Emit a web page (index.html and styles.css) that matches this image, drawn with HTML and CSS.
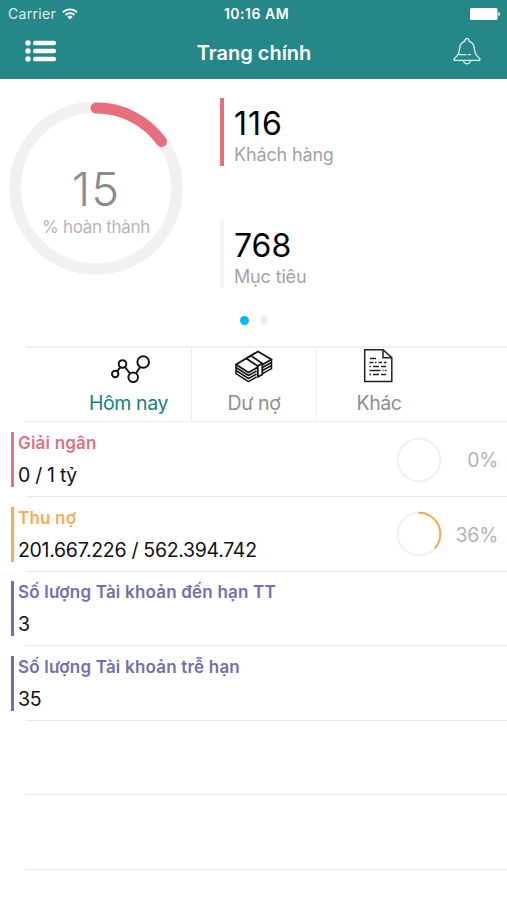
FILE: index.html
```html
<!DOCTYPE html>
<html lang="vi">
<head>
    <meta charset="UTF-8">
    <meta name="viewport" content="width=device-width, initial-scale=1.0">
    <title>Trang chính</title>
    <link rel="stylesheet" href="styles.css">
</head>
<body>
    <header class="header">
        <div class="status-bar">
            <div class="carrier">
                <span>Carrier</span>
                <svg class="wifi" width="16" height="12" viewBox="0 0 16 12" fill="none" stroke="#fff" stroke-width="1.8">
                    <path d="M1 4.3a10 10 0 0 1 14 0M3.5 7a6.4 6.4 0 0 1 9 0"/>
                    <path d="M8 11.5L5.4 8.9a3.7 3.7 0 0 1 5.2 0z" fill="#fff" stroke="none"/>
                </svg>
            </div>
            <span class="time">10:16 AM</span>
            <svg class="battery" width="31" height="12" viewBox="0 0 31 12" fill="#fff">
                <rect x="0" y="0" width="27.5" height="12" rx="1.5"/>
                <path d="M28.3 4c2.2.6 2.2 3.4 0 4z"/>
            </svg>
        </div>
        <div class="nav-bar">
            <svg class="menu-icon" width="32" height="23" viewBox="0 0 32 23" fill="#fff">
                <circle cx="3" cy="3" r="2.7"/>
                <circle cx="3" cy="11" r="2.7"/>
                <circle cx="3" cy="19" r="2.7"/>
                <rect x="8" y="0.7" width="23" height="4.6" rx="2"/>
                <rect x="8" y="8.7" width="23" height="4.6" rx="2"/>
                <rect x="8" y="16.7" width="23" height="4.6" rx="2"/>
            </svg>
            <h1>Trang chính</h1>
            <svg class="bell-icon" width="28" height="27" viewBox="0 0 28 27" fill="none" stroke="#d5f1f0" stroke-width="1.3" stroke-linejoin="round">
                <path d="M12 3.2V2.5a2 2 0 0 1 4 0v.7c3.600 1 5 3.800 5.400 7.500.4 4.300 1.700 7.300 5.500 10v1.600H1.100v-1.600c3.800-2.700 5.100-5.700 5.500-10 .4-3.700 1.800-6.500 5.400-7.500z"/>
                <path d="M10.5 22.5c.5 4.300 6.500 4.300 7 0M5.500 16.700h8M15 16.700h3"/>
            </svg>
        </div>
    </header>

    <section class="summary">
        <div class="progress">
            <svg class="ring" width="174" height="174" viewBox="0 0 174 174" fill="none">
                <circle cx="87" cy="87" r="81" stroke="#f1f1f1" stroke-width="11.5"/>
                <path d="M87 7A80 80 0 0 1 152.5 40.5" stroke="#e96e7b" stroke-width="11" stroke-linecap="round"/>
            </svg>
            <div class="progress-text">
                <div class="progress-value">15</div>
                <div class="progress-label">% hoàn thành</div>
            </div>
        </div>
        <div class="stats">
            <div class="stat active">
                <div class="stat-value">116</div>
                <div class="stat-label">Khách hàng</div>
            </div>
            <div class="stat">
                <div class="stat-value">768</div>
                <div class="stat-label">Mục tiêu</div>
            </div>
        </div>
        <div class="dots">
            <span class="dot current"></span>
            <span class="dot"></span>
        </div>
    </section>

    <nav class="tabs">
        <div class="tab selected">
            <svg width="42" height="36" viewBox="0 0 42 36" fill="none" stroke="#151515" stroke-width="2">
                <circle cx="7.2" cy="26" r="3.2"/>
                <circle cx="14.5" cy="16" r="3.8"/>
                <circle cx="25.2" cy="29.3" r="4.8"/>
                <circle cx="35.2" cy="14" r="5.8"/>
                <path d="M9.2 23.3l3-4M17 19l5 6.5M28 25.3l4-6"/>
            </svg>
            <span>Hôm nay</span>
        </div>
        <div class="tab">
            <svg width="42" height="36" viewBox="0 0 42 36" fill="none" stroke="#151515" stroke-width="1.5" stroke-linejoin="round">
                <path d="M3 16.5L25 3.5 38.5 11.5 15.5 24.5z" stroke-width="1.9"/>
                <path d="M3 16.5v3l12.5 8 8-4.5M29.5 19.5l9-5v-3"/>
                <path d="M3 19.5v3l12.5 8 8-4.5M29.5 22.5l9-5v-3"/>
                <path d="M3 22.5v3.200l12.5 8 8-4.700M29.5 25.7l9-5v-3.2"/>
                <path d="M13.3 10.5l11.5 7.5v11l4.5-2.5V15.5L18 7.7z" fill="#fff" stroke-width="1.8"/>
                <path d="M24.8 18l4.5-2.5"/>
            </svg>
            <span>Dư nợ</span>
        </div>
        <div class="tab">
            <svg width="42" height="36" viewBox="0 0 42 36" fill="none" stroke="#222" stroke-width="1.5">
                <path d="M6.7 1.7h18.300l8.800 8v23.800H6.700z"/>
                <path d="M25 1.7v8h8.8"/>
                <path d="M12 10.5h6M11.5 14.5h4M17 14.5h1.5M20.5 14.5h3.5M26 14.5h2.5M11.5 18.5h1.5M15 18.5h6M23 18.5h5M11.5 22.5h11M24.5 22.5h1M27 22.5h1.5M11.5 26.5h1.5M15 26.5h6M23 26.5h5"/>
            </svg>
            <span>Khác</span>
        </div>
    </nav>

    <main class="list">
        <div class="row red">
            <div class="row-info">
                <div class="row-title">Giải ngân</div>
                <div class="row-value">0 / 1 tỷ</div>
            </div>
            <svg class="mini-ring" width="46" height="46" viewBox="0 0 46 46" fill="none">
                <circle cx="23" cy="23" r="21.3" stroke="#f1f1f1" stroke-width="2.3"/>
            </svg>
            <span class="percent">0%</span>
        </div>
        <div class="row orange">
            <div class="row-info">
                <div class="row-title">Thu nợ</div>
                <div class="row-value">201.667.226 / 562.394.742</div>
            </div>
            <svg class="mini-ring" width="46" height="46" viewBox="0 0 46 46" fill="none">
                <circle cx="23" cy="23" r="21.3" stroke="#f1f1f1" stroke-width="2.3"/>
                <path d="M23 1.7A21.3 21.3 0 0 1 39.4 36.6" stroke="#fbab58" stroke-width="2" stroke-linecap="round"/>
            </svg>
            <span class="percent">36%</span>
        </div>
        <div class="row purple">
            <div class="row-info">
                <div class="row-title">Số lượng Tài khoản đến hạn TT</div>
                <div class="row-value">3</div>
            </div>
        </div>
        <div class="row purple">
            <div class="row-info">
                <div class="row-title">Số lượng Tài khoản trễ hạn</div>
                <div class="row-value">35</div>
            </div>
        </div>
        <div class="row"></div>
        <div class="row"></div>
    </main>
</body>
</html>
```
FILE: styles.css
```css
* {
    box-sizing: border-box;
}
body {
    margin: 0;
    height: 900px;
    overflow: hidden;
    background-color: #fff;
    font-family: Inter, "Liberation Sans", sans-serif;
    color: #000;
}
svg {
    display: block;
}
.header {
    height: 79px;
    background-color: #268789;
    color: #fff;
}
.status-bar {
    display: grid;
    grid-template-columns: 1fr auto 1fr;
    align-items: center;
    height: 27px;
    padding: 0 6px 0 8px;
    font-size: 14px;
}
.carrier {
    display: flex;
    align-items: center;
    gap: 6px;
    color: #d9f1f1;
    letter-spacing: 0.3px;
}
.time {
    padding-left: 4px;
    font-size: 14px;
    font-weight: 600;
    letter-spacing: 0.5px;
}
.battery {
    justify-self: end;
}
.nav-bar {
    display: grid;
    grid-template-columns: 1fr auto 1fr;
    align-items: center;
    height: 49px;
    padding: 0 26px 0 25px;
}
.nav-bar h1 {
    margin: 0;
    padding: 2px 0 0 2px;
    font-size: 20px;
    font-weight: 600;
}
.bell-icon {
    justify-self: end;
}
.summary {
    display: grid;
    grid-template-columns: 220px 1fr;
    grid-template-rows: 225px 1fr;
    height: 267px;
}
.progress {
    display: grid;
    padding: 22px 0 0 9px;
}
.ring, .progress-text {
    grid-area: 1 / 1;
}
.progress-text {
    width: 174px;
    padding-top: 63px;
    text-align: center;
}
.progress-value {
    font-size: 47px;
    font-weight: 300;
    line-height: 50px;
    letter-spacing: 1px;
    color: #8c8c8c;
}
.progress-label {
    margin-top: 1px;
    font-size: 17px;
    line-height: 24px;
    letter-spacing: -0.3px;
    color: #b5b5b5;
}
.stats {
    display: flex;
    flex-direction: column;
    gap: 54px;
    padding-top: 19px;
}
.stat {
    height: 68px;
    padding: 8px 0 0 10px;
    border-left: 4px solid #f4f4f4;
}
.stat.active {
    border-left-color: #e96e7b;
}
.stat-value {
    font-size: 32px;
    line-height: 36px;
}
.active .stat-value {
    letter-spacing: 1px;
}
.stat-label {
    font-size: 18px;
    line-height: 26px;
    letter-spacing: -0.15px;
    color: #a3a3a3;
}
.dots {
    grid-column: 1 / 3;
    display: flex;
    justify-content: center;
    gap: 11px;
    padding-top: 12px;
}
.dot {
    width: 8px;
    height: 8px;
    border-radius: 50%;
    background-color: #ececec;
}
.dot.current {
    width: 9px;
    height: 9px;
    background-color: #00b9fb;
}
.tabs {
    display: flex;
    height: 76px;
    margin-left: 26px;
    padding-left: 40px;
    border-top: 2px solid #f1f1f1;
    border-bottom: 1px solid #eee;
}
.tab {
    display: flex;
    flex-direction: column;
    align-items: center;
    width: 125px;
    font-size: 19.5px;
    line-height: 26px;
    letter-spacing: -0.4px;
    color: #8e8e8e;
}
.tab + .tab {
    border-left: 1px solid #eee;
}
.tab span {
    margin-top: 6px;
}
.tab.selected {
    color: #158080;
}
.list {
    padding-top: 0.5px;
}
.row {
    display: flex;
    align-items: center;
    height: 74.6px;
    padding: 0 9px 0 10.5px;
    background: linear-gradient(#e9e9e9, #e9e9e9) 26px 100% / 100% 1px no-repeat;
}
.row-info {
    flex: 1;
    height: 55px;
    padding-left: 4.5px;
    border-left: 3px solid;
}
.row-title {
    font-size: 17px;
    font-weight: 600;
    line-height: 22px;
    letter-spacing: 0.2px;
}
.row-value {
    margin-top: 8px;
    font-size: 19.5px;
    line-height: 26px;
    letter-spacing: -0.3px;
    color: #111;
}
.red .row-info {
    border-color: #e17485;
    color: #de7084;
}
.orange .row-info {
    border-color: #fbab58;
    color: #fbab58;
}
.purple .row-info {
    border-color: #736fae;
    color: #736fae;
}
.percent {
    width: 56px;
    padding-top: 1px;
    font-size: 19.5px;
    text-align: right;
    letter-spacing: -0.3px;
    color: #b2b2b2;
}
```
